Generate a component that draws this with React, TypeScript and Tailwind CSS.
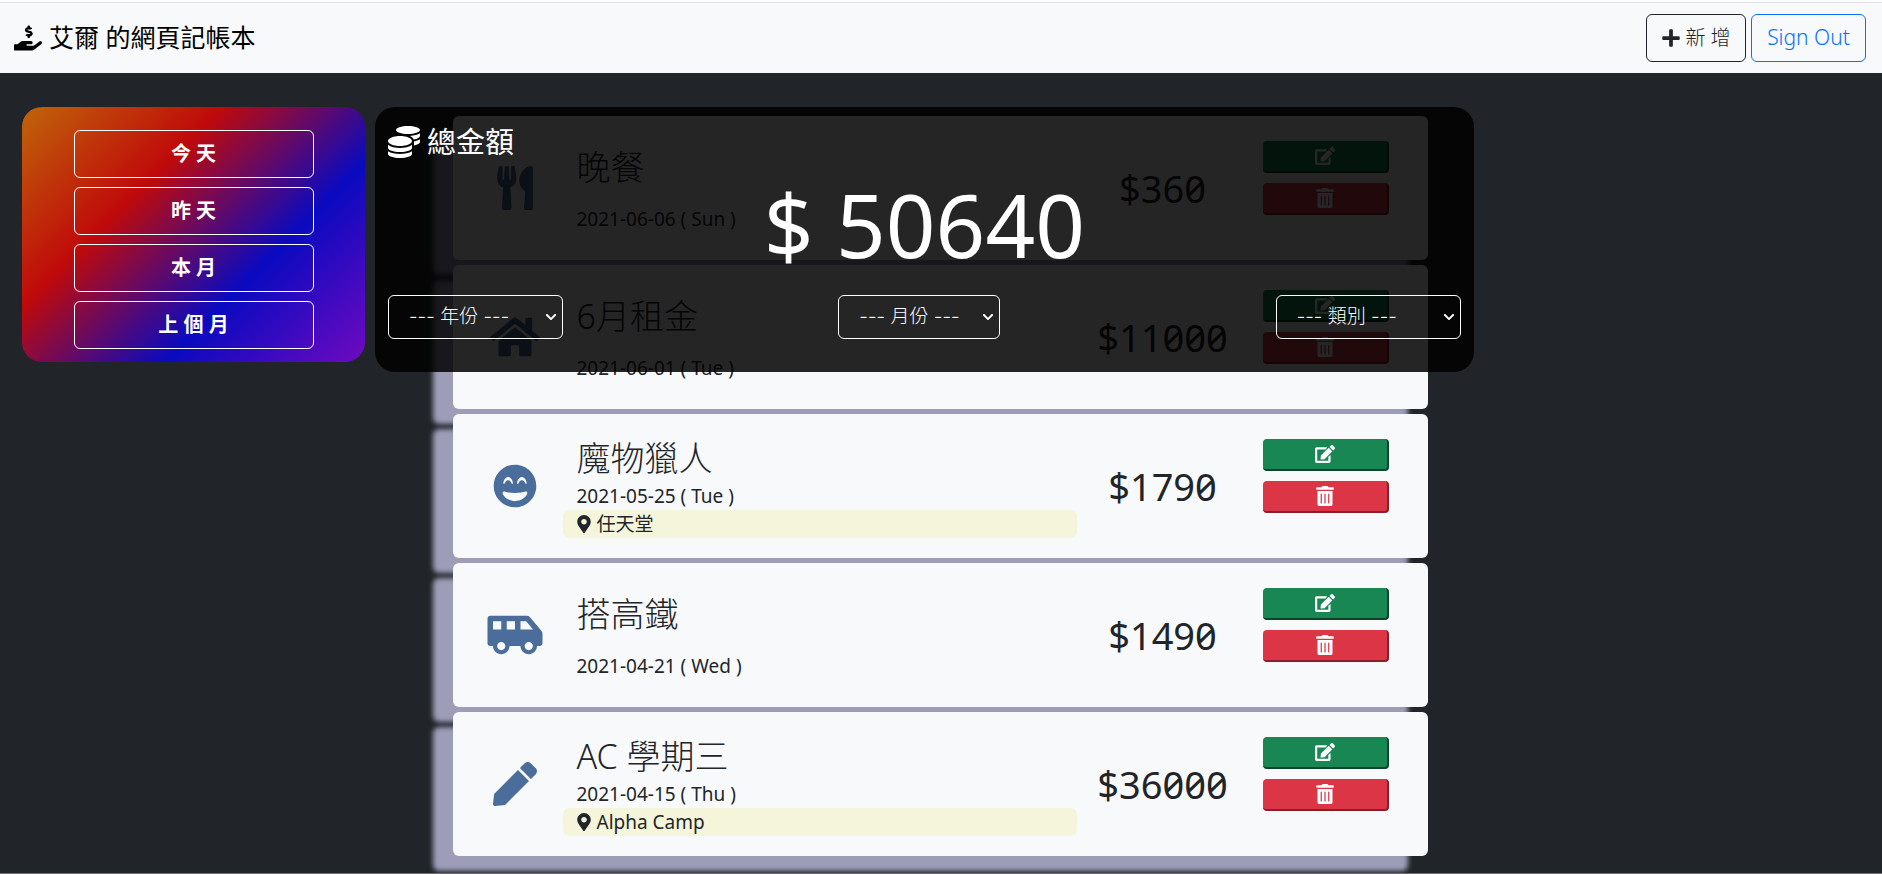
import React from "react";
import {
  FaChevronDown,
  FaCoins,
  FaEdit,
  FaGrinBeam,
  FaHandHoldingUsd,
  FaHome,
  FaMapMarkerAlt,
  FaPen,
  FaPlus,
  FaShuttleVan,
  FaTrashAlt,
  FaUtensils,
} from "react-icons/fa";

type Entry = {
  name: string;
  date: string;
  amount: string;
  merchant?: string;
  Icon: React.ComponentType<{ className?: string }>;
};

const entries: Entry[] = [
  { name: "晚餐", date: "2021-06-06 ( Sun )", amount: "$360", Icon: FaUtensils },
  { name: "6月租金", date: "2021-06-01 ( Tue )", amount: "$11000", Icon: FaHome },
  { name: "魔物獵人", date: "2021-05-25 ( Tue )", amount: "$1790", merchant: "任天堂", Icon: FaGrinBeam },
  { name: "搭高鐵", date: "2021-04-21 ( Wed )", amount: "$1490", Icon: FaShuttleVan },
  { name: "AC 學期三", date: "2021-04-15 ( Thu )", amount: "$36000", merchant: "Alpha Camp", Icon: FaPen },
];

const periods = ["今 天", "昨 天", "本 月", "上 個 月"];

function Card({ entry }: { entry: Entry }) {
  const { Icon } = entry;
  return (
    <li className="flex h-36 rounded-md bg-[#f8f9fa] shadow-[-20px_15px_5px_#9d9db8]">
      <div className="flex w-[124px] items-center justify-center text-[#4a6d9c]">
        <Icon className="h-11 w-14" />
      </div>
      <div className="flex w-[486px] flex-col justify-center">
        <h2 className={entry.merchant ? "text-[34px] leading-[48px] font-light" : "mb-[14px] text-[34px] leading-[48px] font-light"}>
          {entry.name}
        </h2>
        <p className="text-[19px] leading-7">{entry.date}</p>
        {entry.merchant && (
          <p className="-ml-[14px] flex h-7 w-[514px] items-center gap-[6px] rounded-md bg-[#f5f5dc] px-[14px] text-[19px]">
            <FaMapMarkerAlt className="h-[18px] w-[14px]" />
            {entry.merchant}
          </p>
        )}
      </div>
      <div className="flex w-[200px] items-center justify-center text-[38px] slashed-zero">{entry.amount}</div>
      <div className="flex w-[126px] flex-col gap-[10px] pt-[25px]">
        <button aria-label="編輯" className="flex h-8 items-center justify-center rounded border-r-2 border-b-2 border-[#0c4429] bg-[#198754] text-xl text-white">
          <FaEdit />
        </button>
        <button aria-label="刪除" className="flex h-8 items-center justify-center rounded border-r-2 border-b-2 border-[#8a1f2b] bg-[#dc3545] text-xl text-white">
          <FaTrashAlt />
        </button>
      </div>
    </li>
  );
}

function Filter({ label, text, width }: { label: string; text: string; width: string }) {
  return (
    <div className={"relative " + width}>
      <select
        aria-label={label}
        className="h-11 w-full appearance-none rounded-md border border-white bg-transparent px-5 font-['Inter','Noto_Sans_CJK_TC',sans-serif] text-[19px] font-light text-white"
      >
        <option>{text}</option>
      </select>
      <FaChevronDown className="pointer-events-none absolute top-4 right-[6px] size-3" />
    </div>
  );
}

export default function App() {
  return (
    <div className="h-screen overflow-hidden border-b border-[#6c6e73] bg-[#212529] font-['Noto_Sans','Noto_Sans_CJK_TC',sans-serif] text-[#212529]">
      <header className="border-t-2 border-white">
        <nav className="flex h-[71px] items-center justify-between border-t border-[#dee2e6] bg-[#f8f9fa] pr-4 pl-[14px]">
          <a href="#" className="flex items-center gap-[7px] text-[25px] text-black">
            <FaHandHoldingUsd className="size-7" />
            艾爾 的網頁記帳本
          </a>
          <div className="flex gap-[5px]">
            <button className="flex h-12 w-[100px] items-center justify-center gap-1 rounded-md border border-[#212529] text-xl font-light">
              <FaPlus />
              新 增
            </button>
            <button className="h-12 w-[115px] rounded-md border border-[#0d6efd] text-[21px] font-light text-[#0d6efd]">Sign Out</button>
          </div>
        </nav>
      </header>
      <main className="relative pr-[2px]">
        <ul className="mx-auto flex max-w-[975px] flex-col gap-[5px] pt-[43px]">
          {entries.map((e) => (
            <Card key={e.name} entry={e} />
          ))}
        </ul>
        <div className="absolute inset-x-0 top-[34px] flex items-start gap-[10px] pr-[2px] pl-[22px] text-white">
          <section className="flex w-[343px] shrink-0 flex-col items-center gap-[9px] rounded-[20px] bg-[linear-gradient(135deg,#c0650a,#c00a0a,#0a0ac0,#700ac0)] pt-[23px] pb-[13px]">
            {periods.map((p) => (
              <button key={p} className="h-12 w-60 rounded-md border border-white text-xl font-bold">
                {p}
              </button>
            ))}
          </section>
          <div className="w-full">
            <section className="flex w-[73%] flex-col rounded-[20px] bg-black/85 px-[13px] pt-3 pb-[33px]">
              <h1 className="flex items-center gap-[7px] text-[29px] leading-[46px]">
                <FaCoins className="size-8" />
                總金額
              </h1>
              <p className="text-center text-[87px] leading-[118px]">$ 50640</p>
              <div className="mt-3 flex justify-between">
                <Filter label="年份" text="--- 年份 ---" width="w-[175px]" />
                <Filter label="月份" text="--- 月份 ---" width="w-[162px]" />
                <Filter label="類別" text="--- 類別 ---" width="w-[185px]" />
              </div>
            </section>
          </div>
        </div>
      </main>
    </div>
  );
}
